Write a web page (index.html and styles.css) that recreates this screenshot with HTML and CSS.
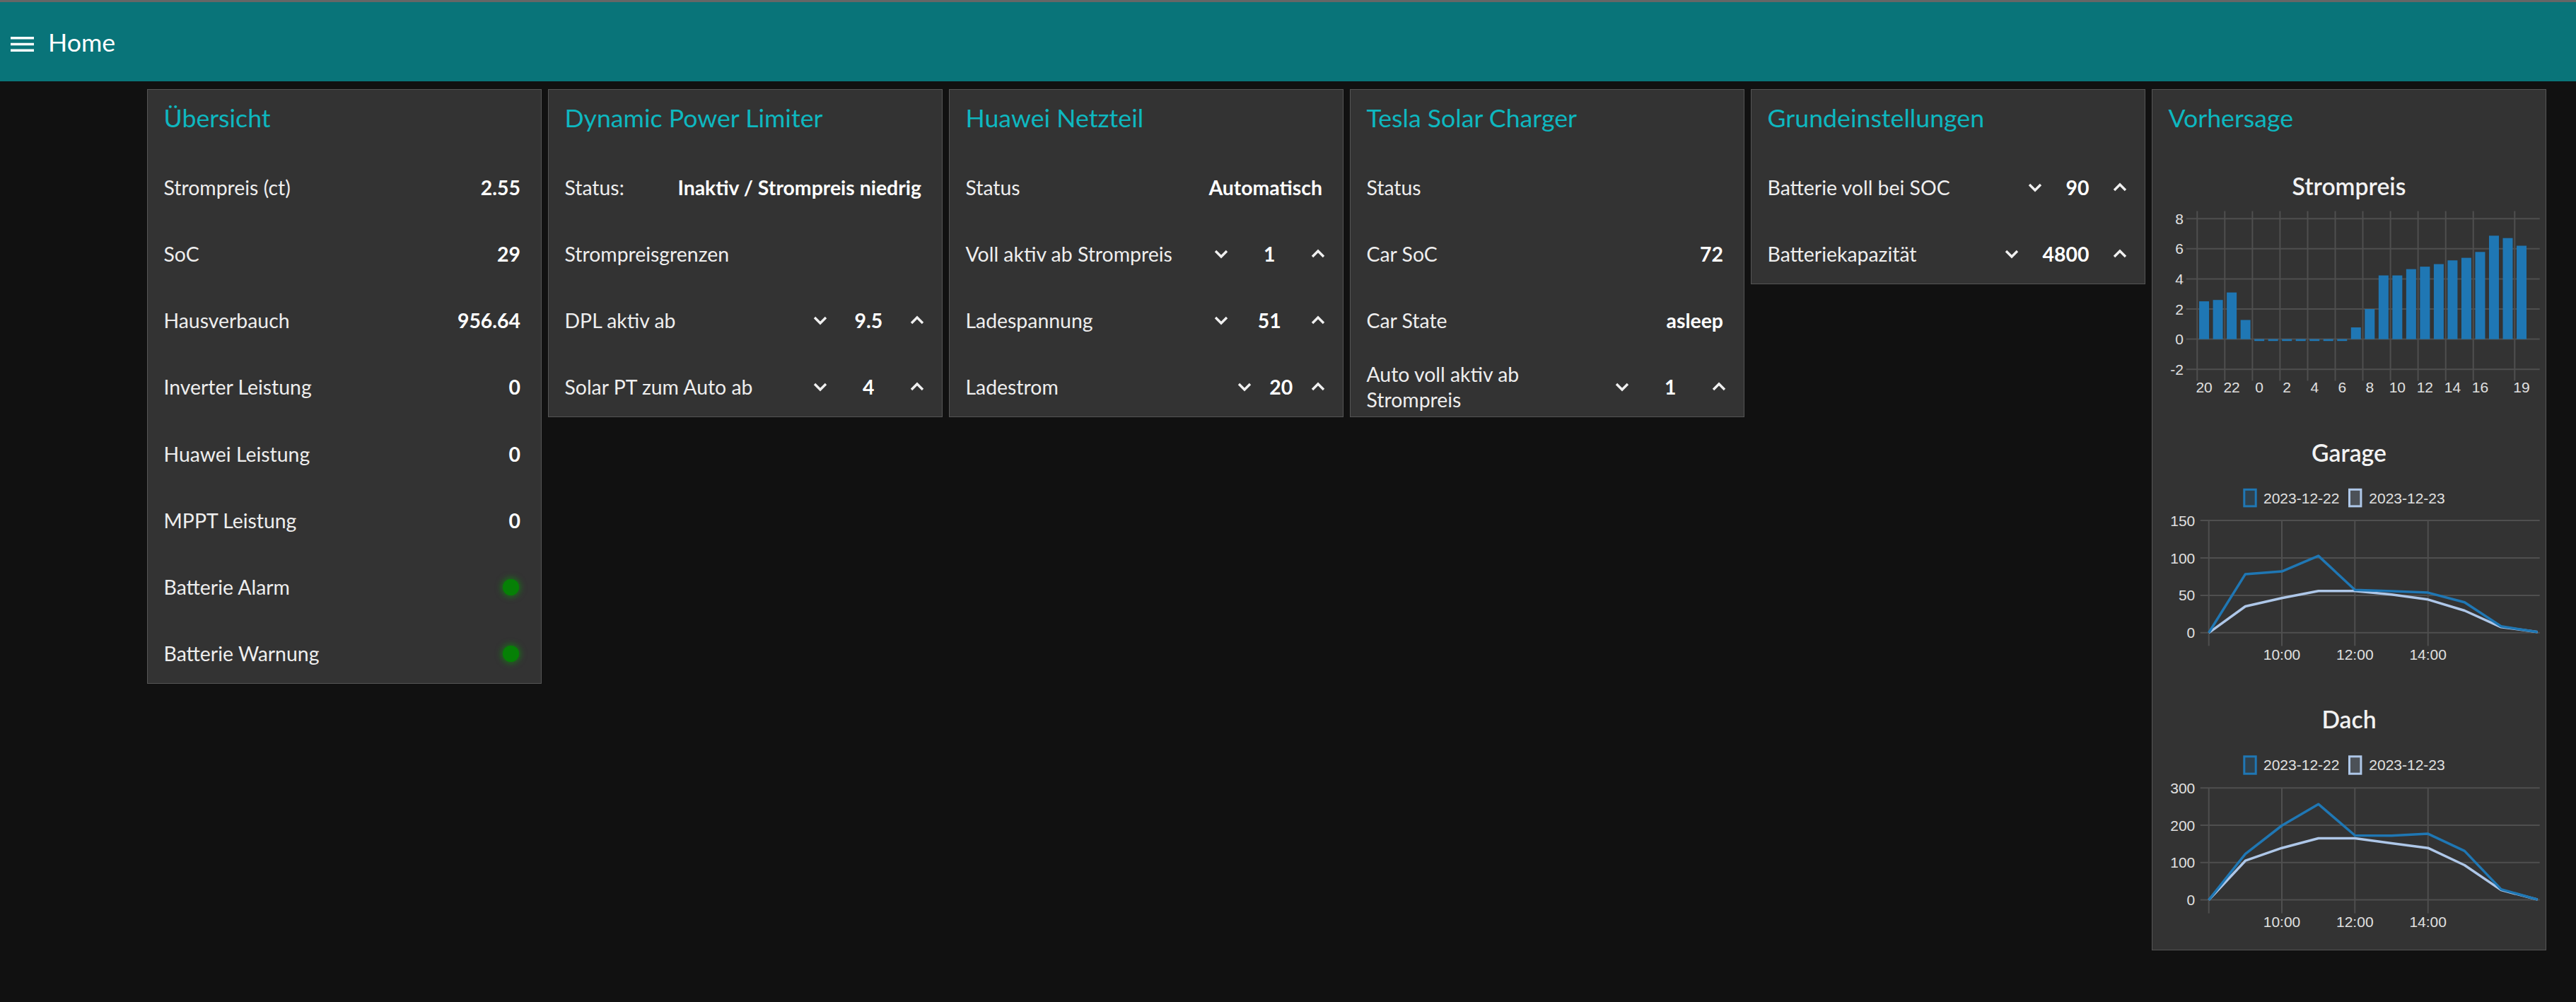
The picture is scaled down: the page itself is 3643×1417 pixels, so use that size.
FILE: index.html
```html
<!DOCTYPE html>
<html lang="de">
<head>
<meta charset="utf-8">
<title>Home</title>
<link rel="stylesheet" href="styles.css">
</head>
<body>
<header class="toolbar">
  <svg class="menu-icon" viewBox="0 0 33 21" aria-hidden="true">
    <rect x="0" y="0" width="33" height="3.5"/>
    <rect x="0" y="8.75" width="33" height="3.5"/>
    <rect x="0" y="17.5" width="33" height="3.5"/>
  </svg>
  <span class="toolbar-title">Home</span>
</header>

<main class="board">
  <!-- Übersicht -->
  <section class="card">
    <h2 class="card-title">Übersicht</h2>
    <div class="card-body">
      <div class="row"><span class="label">Strompreis (ct)</span><span class="value">2.55</span></div>
      <div class="row"><span class="label">SoC</span><span class="value">29</span></div>
      <div class="row"><span class="label">Hausverbauch</span><span class="value">956.64</span></div>
      <div class="row"><span class="label">Inverter Leistung</span><span class="value">0</span></div>
      <div class="row"><span class="label">Huawei Leistung</span><span class="value">0</span></div>
      <div class="row"><span class="label">MPPT Leistung</span><span class="value">0</span></div>
      <div class="row"><span class="label">Batterie Alarm</span><span class="led"></span></div>
      <div class="row"><span class="label">Batterie Warnung</span><span class="led"></span></div>
    </div>
  </section>

  <!-- Dynamic Power Limiter -->
  <section class="card">
    <h2 class="card-title">Dynamic Power Limiter</h2>
    <div class="card-body">
      <div class="row"><span class="label">Status:</span><span class="value">Inaktiv / Strompreis niedrig</span></div>
      <div class="row"><span class="label">Strompreisgrenzen</span></div>
      <div class="row"><span class="label">DPL aktiv ab</span>
        <div class="num">
          <svg class="chev" viewBox="0 0 20 12"><polyline points="2,2 10,10 18,2"/></svg>
          <span class="num-val w117">9.5</span>
          <svg class="chev" viewBox="0 0 20 12"><polyline points="2,10 10,2 18,10"/></svg>
        </div>
      </div>
      <div class="row"><span class="label">Solar PT zum Auto ab</span>
        <div class="num">
          <svg class="chev" viewBox="0 0 20 12"><polyline points="2,2 10,10 18,2"/></svg>
          <span class="num-val w117">4</span>
          <svg class="chev" viewBox="0 0 20 12"><polyline points="2,10 10,2 18,10"/></svg>
        </div>
      </div>
    </div>
  </section>

  <!-- Huawei Netzteil -->
  <section class="card">
    <h2 class="card-title">Huawei Netzteil</h2>
    <div class="card-body">
      <div class="row"><span class="label">Status</span><span class="value">Automatisch</span></div>
      <div class="row"><span class="label">Voll aktiv ab Strompreis</span>
        <div class="num">
          <svg class="chev" viewBox="0 0 20 12"><polyline points="2,2 10,10 18,2"/></svg>
          <span class="num-val w117">1</span>
          <svg class="chev" viewBox="0 0 20 12"><polyline points="2,10 10,2 18,10"/></svg>
        </div>
      </div>
      <div class="row"><span class="label">Ladespannung</span>
        <div class="num">
          <svg class="chev" viewBox="0 0 20 12"><polyline points="2,2 10,10 18,2"/></svg>
          <span class="num-val w117">51</span>
          <svg class="chev" viewBox="0 0 20 12"><polyline points="2,10 10,2 18,10"/></svg>
        </div>
      </div>
      <div class="row"><span class="label">Ladestrom</span>
        <div class="num">
          <svg class="chev" viewBox="0 0 20 12"><polyline points="2,2 10,10 18,2"/></svg>
          <span class="num-val w84">20</span>
          <svg class="chev" viewBox="0 0 20 12"><polyline points="2,10 10,2 18,10"/></svg>
        </div>
      </div>
    </div>
  </section>

  <!-- Tesla Solar Charger -->
  <section class="card">
    <h2 class="card-title">Tesla Solar Charger</h2>
    <div class="card-body">
      <div class="row"><span class="label">Status</span></div>
      <div class="row"><span class="label">Car SoC</span><span class="value">72</span></div>
      <div class="row"><span class="label">Car State</span><span class="value">asleep</span></div>
      <div class="row"><span class="label two-line">Auto voll aktiv ab<br>Strompreis</span>
        <div class="num">
          <svg class="chev" viewBox="0 0 20 12"><polyline points="2,2 10,10 18,2"/></svg>
          <span class="num-val w117">1</span>
          <svg class="chev" viewBox="0 0 20 12"><polyline points="2,10 10,2 18,10"/></svg>
        </div>
      </div>
    </div>
  </section>

  <!-- Grundeinstellungen -->
  <section class="card">
    <h2 class="card-title">Grundeinstellungen</h2>
    <div class="card-body">
      <div class="row"><span class="label">Batterie voll bei SOC</span>
        <div class="num">
          <svg class="chev" viewBox="0 0 20 12"><polyline points="2,2 10,10 18,2"/></svg>
          <span class="num-val w100">90</span>
          <svg class="chev" viewBox="0 0 20 12"><polyline points="2,10 10,2 18,10"/></svg>
        </div>
      </div>
      <div class="row"><span class="label">Batteriekapazität</span>
        <div class="num">
          <svg class="chev" viewBox="0 0 20 12"><polyline points="2,2 10,10 18,2"/></svg>
          <span class="num-val w133">4800</span>
          <svg class="chev" viewBox="0 0 20 12"><polyline points="2,10 10,2 18,10"/></svg>
        </div>
      </div>
    </div>
  </section>

  <!-- Vorhersage -->
  <section class="card">
    <h2 class="card-title">Vorhersage</h2>
    <div class="card-body">
      <div class="chart">
        <div class="chart-title">Strompreis</div>
        <svg class="plot" viewBox="0 0 556 291.75">
          <g class="grid">
            <line x1="47.7" y1="11.2" x2="547.7" y2="11.2"/>
            <line x1="47.7" y1="53.8" x2="547.7" y2="53.8"/>
            <line x1="47.7" y1="96.4" x2="547.7" y2="96.4"/>
            <line x1="47.7" y1="139" x2="547.7" y2="139"/>
            <line x1="47.7" y1="181.6" x2="547.7" y2="181.6"/>
            <line x1="47.7" y1="224.2" x2="547.7" y2="224.2"/>
            <line x1="63.3" y1="0.5" x2="63.3" y2="240.5"/>
            <line x1="102.3" y1="0.5" x2="102.3" y2="240.5"/>
            <line x1="141.4" y1="0.5" x2="141.4" y2="240.5"/>
            <line x1="180.4" y1="0.5" x2="180.4" y2="240.5"/>
            <line x1="219.5" y1="0.5" x2="219.5" y2="240.5"/>
            <line x1="258.5" y1="0.5" x2="258.5" y2="240.5"/>
            <line x1="297.5" y1="0.5" x2="297.5" y2="240.5"/>
            <line x1="336.6" y1="0.5" x2="336.6" y2="240.5"/>
            <line x1="375.6" y1="0.5" x2="375.6" y2="240.5"/>
            <line x1="414.7" y1="0.5" x2="414.7" y2="240.5"/>
            <line x1="453.7" y1="0.5" x2="453.7" y2="240.5"/>
            <line x1="512.3" y1="0.5" x2="512.3" y2="240.5"/>
          </g>
          <g class="bars">
            <rect x="66.06" y="128.1" width="14" height="53.5"/>
            <rect x="85.58" y="126.2" width="14" height="55.4"/>
            <rect x="105.1" y="115.6" width="14" height="66"/>
            <rect x="124.62" y="154.5" width="14" height="27.1"/>
            <rect x="144.14" y="181.6" width="14" height="2.6"/>
            <rect x="163.66" y="181.6" width="14" height="2.6"/>
            <rect x="183.18" y="181.6" width="14" height="2.6"/>
            <rect x="202.7" y="181.6" width="14" height="2.6"/>
            <rect x="222.22" y="181.6" width="14" height="2.6"/>
            <rect x="241.74" y="181.6" width="14" height="2.6"/>
            <rect x="261.26" y="181.6" width="14" height="2.6"/>
            <rect x="280.78" y="165" width="14" height="16.6"/>
            <rect x="300.3" y="139" width="14" height="42.6"/>
            <rect x="319.82" y="91.5" width="14" height="90.1"/>
            <rect x="339.34" y="91.5" width="14" height="90.1"/>
            <rect x="358.86" y="82.6" width="14" height="99"/>
            <rect x="378.38" y="79.1" width="14" height="102.5"/>
            <rect x="397.9" y="75.5" width="14" height="106.1"/>
            <rect x="417.42" y="70.2" width="14" height="111.4"/>
            <rect x="436.94" y="66.6" width="14" height="115"/>
            <rect x="456.46" y="58.3" width="14" height="123.3"/>
            <rect x="475.98" y="35.3" width="14" height="146.3"/>
            <rect x="495.5" y="38.7" width="14" height="142.9"/>
            <rect x="515.02" y="49.5" width="14" height="132.1"/>
          </g>
          <g class="ticks y-ticks">
            <text x="44" y="18.7">8</text>
            <text x="44" y="61.3">6</text>
            <text x="44" y="103.9">4</text>
            <text x="44" y="146.5">2</text>
            <text x="44" y="189.1">0</text>
            <text x="44" y="231.7">-2</text>
          </g>
          <g class="ticks x-ticks">
            <text x="73.06" y="257.4">20</text>
            <text x="112.1" y="257.4">22</text>
            <text x="151.14" y="257.4">0</text>
            <text x="190.18" y="257.4">2</text>
            <text x="229.22" y="257.4">4</text>
            <text x="268.26" y="257.4">6</text>
            <text x="307.3" y="257.4">8</text>
            <text x="346.34" y="257.4">10</text>
            <text x="385.38" y="257.4">12</text>
            <text x="424.42" y="257.4">14</text>
            <text x="463.46" y="257.4">16</text>
            <text x="522.02" y="257.4">19</text>
          </g>
        </svg>
      </div>

      <div class="chart">
        <div class="chart-title">Garage</div>
        <svg class="plot" viewBox="0 0 556 291.75">
          <g class="legend">
            <rect class="key-a" x="129.8" y="17.3" width="16.4" height="23.6"/>
            <text x="157" y="36.6">2023-12-22</text>
            <rect class="key-b" x="278.5" y="17.3" width="16.4" height="23.6"/>
            <text x="306.3" y="36.6">2023-12-23</text>
          </g>
          <g class="grid">
            <line x1="67.7" y1="61.1" x2="547.7" y2="61.1"/>
            <line x1="67.7" y1="114" x2="547.7" y2="114"/>
            <line x1="67.7" y1="166.9" x2="547.7" y2="166.9"/>
            <line x1="67.7" y1="219.8" x2="547.7" y2="219.8"/>
            <line x1="79.7" y1="61.1" x2="79.7" y2="238.4"/>
            <line x1="183" y1="61.1" x2="183" y2="238.4"/>
            <line x1="286.3" y1="61.1" x2="286.3" y2="238.4"/>
            <line x1="389.7" y1="61.1" x2="389.7" y2="238.4"/>
          </g>
          <polyline class="series-b" points="79.7,219.8 131.4,182.5 183,170.8 234.7,160.8 286.4,160.8 338.1,165.8 389.7,172.8 441.4,188.5 493.1,211.8 544.7,218.7"/>
          <polyline class="series-a" points="79.7,219.8 131.4,136.9 183,133.1 234.7,111.1 286.4,159.2 338.1,161.1 389.7,163.1 441.4,176.8 493.1,210.8 544.7,218.7"/>
          <g class="ticks y-ticks">
            <text x="60.3" y="68.6">150</text>
            <text x="60.3" y="121.5">100</text>
            <text x="60.3" y="174.4">50</text>
            <text x="60.3" y="227.3">0</text>
          </g>
          <g class="ticks x-ticks">
            <text x="183" y="257.6">10:00</text>
            <text x="286.3" y="257.6">12:00</text>
            <text x="389.7" y="257.6">14:00</text>
          </g>
        </svg>
      </div>

      <div class="chart">
        <div class="chart-title">Dach</div>
        <svg class="plot" viewBox="0 0 556 291.75">
          <g class="legend">
            <rect class="key-a" x="129.8" y="17.8" width="16.4" height="24.4"/>
            <text x="157" y="37.1">2023-12-22</text>
            <rect class="key-b" x="278.5" y="17.8" width="16.4" height="24.4"/>
            <text x="306.3" y="37.1">2023-12-23</text>
          </g>
          <g class="grid">
            <line x1="67.7" y1="62.2" x2="547.7" y2="62.2"/>
            <line x1="67.7" y1="115" x2="547.7" y2="115"/>
            <line x1="67.7" y1="167.8" x2="547.7" y2="167.8"/>
            <line x1="67.7" y1="220.6" x2="547.7" y2="220.6"/>
            <line x1="79.7" y1="62.2" x2="79.7" y2="239.6"/>
            <line x1="183" y1="62.2" x2="183" y2="239.6"/>
            <line x1="286.3" y1="62.2" x2="286.3" y2="239.6"/>
            <line x1="389.7" y1="62.2" x2="389.7" y2="239.6"/>
          </g>
          <polyline class="series-b" points="79.7,220.6 131.4,165.2 183,147.2 234.7,133.5 286.4,133.5 338.1,140.6 389.7,147.2 441.4,171.5 493.1,206.6 544.7,220.1"/>
          <polyline class="series-a" points="79.7,220.6 131.4,155.7 183,115.5 234.7,85.2 286.4,129.5 338.1,129.8 389.7,127.1 441.4,151.4 493.1,205.6 544.7,220.1"/>
          <g class="ticks y-ticks">
            <text x="60.3" y="69.7">300</text>
            <text x="60.3" y="122.5">200</text>
            <text x="60.3" y="175.3">100</text>
            <text x="60.3" y="228.1">0</text>
          </g>
          <g class="ticks x-ticks">
            <text x="183" y="258.7">10:00</text>
            <text x="286.3" y="258.7">12:00</text>
            <text x="389.7" y="258.7">14:00</text>
          </g>
        </svg>
      </div>
    </div>
  </section>
</main>
</body>
</html>
```

FILE: styles.css
```css
html, body {
  margin: 0;
  padding: 0;
}

body {
  background: #111111;
  border-top: 3px solid #666666;
  font-family: Lato, "Open Sans", sans-serif;
  color: #eeeeee;
}

/* ---------- toolbar ---------- */
.toolbar {
  height: 112px;
  box-sizing: border-box;
  background: #097479;
  display: flex;
  align-items: center;
  padding-left: 15px;
}

.menu-icon {
  width: 33px;
  height: 21px;
  fill: #ffffff;
  margin-top: 7px;
  flex: none;
}

.toolbar-title {
  margin-left: 20px;
  margin-top: 2px;
  font-size: 35.7px;
  line-height: 1;
  color: #ffffff;
}

/* ---------- board ---------- */
.board {
  display: flex;
  flex-wrap: nowrap;
  align-items: flex-start;
  gap: 9px;
  padding: 11px 0 0 208px;
}

.card {
  flex: none;
  width: 558px;
  box-sizing: border-box;
  background: #333333;
  border: 1px solid #555555;
}

.card-title {
  margin: 0;
  height: 84px;
  line-height: 80px;
  padding-left: 22.5px;
  font-size: 35.7px;
  font-weight: 400;
  color: #0eb8c0;
  white-space: nowrap;
}

.card-body {
  display: flex;
  flex-direction: column;
  gap: 10.25px;
  padding: 11.7px 29px 0 22.5px;
}

.row {
  height: 84px;
  display: flex;
  align-items: center;
  justify-content: space-between;
  font-size: 28.4px;
}

.label {
  white-space: nowrap;
}

.label.two-line {
  line-height: 36.7px;
}

.value {
  font-weight: 700;
  color: #ffffff;
  white-space: nowrap;
}

.led {
  width: 23px;
  height: 23px;
  border-radius: 50%;
  background: #068006;
  box-shadow: 0 0 8px 2px rgba(0, 170, 0, 0.5);
  margin-right: 2px;
}

/* ---------- numeric widget ---------- */
.num {
  display: flex;
  align-items: center;
  margin-right: -4px;
  flex: none;
}

.chev {
  width: 20px;
  height: 12px;
  fill: none;
  stroke: #f0f0f0;
  stroke-width: 3.4;
  flex: none;
  overflow: visible;
}

.num-val {
  text-align: center;
  font-weight: 700;
  color: #ffffff;
}

.w84 { width: 84.4px; }
.w100 { width: 100px; }
.w117 { width: 117.4px; }
.w133 { width: 133px; }

/* ---------- charts ---------- */
.chart {
  height: 366.75px;
  margin: 0 -29px 0 -22.5px;
  display: flex;
  flex-direction: column;
}

.chart-title {
  height: 75px;
  box-sizing: border-box;
  padding-top: 5px;
  line-height: 70px;
  text-align: center;
  font-size: 33.7px;
  font-weight: 600;
  color: #f2f2f2;
}

.plot {
  display: block;
  width: 556px;
  height: 291.75px;
  overflow: visible;
}

.grid line {
  stroke: #4f4f4f;
  stroke-width: 2;
}

.bars rect {
  fill: #1f77b4;
}

.ticks text,
.legend text {
  font-family: "Liberation Sans", Arial, sans-serif;
  font-size: 21px;
  fill: #e0e0e0;
}

.y-ticks text {
  text-anchor: end;
}

.x-ticks text {
  text-anchor: middle;
}

.key-a {
  fill: #2f414d;
  stroke: #1f77b4;
  stroke-width: 3;
}

.key-b {
  fill: #4c5157;
  stroke: #aec7e8;
  stroke-width: 3;
}

.series-a,
.series-b {
  fill: none;
  stroke-width: 3.5;
  stroke-linejoin: round;
}

.series-a {
  stroke: #1f77b4;
}

.series-b {
  stroke: #aec7e8;
}
```
